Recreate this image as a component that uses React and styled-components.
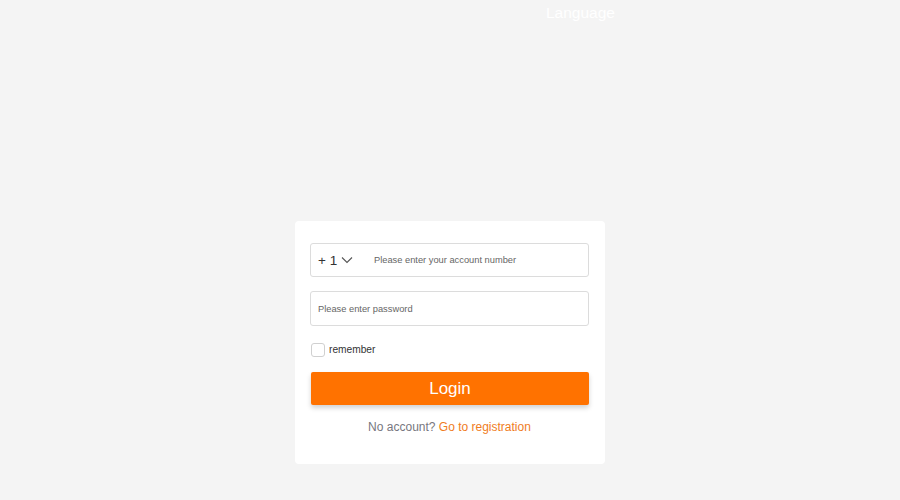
import React, { useState } from 'react';
import styled, { createGlobalStyle } from 'styled-components';

const Global = createGlobalStyle`
  html, body {
    margin: 0;
    padding: 0;
    background: #f4f4f4;
    font-family: "Liberation Sans", Arial, sans-serif;
  }
`;

const Page = styled.div`
  width: 900px;
  height: 500px;
  display: flex;
  flex-direction: column;
  align-items: center;
`;

const Header = styled.div`
  width: 100%;
  height: 25px;
  display: flex;
  align-items: center;
  padding-left: 546px;
  box-sizing: border-box;

  span {
    color: #ffffff;
    font-size: 15.5px;
  }
`;

const Card = styled.div`
  margin-top: 196px;
  width: 310px;
  box-sizing: border-box;
  background: #ffffff;
  border-radius: 4px;
  padding: 22px 16px 30px 15px;
  display: flex;
  flex-direction: column;
`;

const Field = styled.div`
  height: ${(p) => p.$h || 34}px;
  border: 1px solid #dcdcdc;
  border-radius: 3px;
  display: flex;
  align-items: center;
  box-sizing: border-box;
  margin-bottom: ${(p) => p.$gap || 0}px;
`;

const Code = styled.div`
  width: 56px;
  padding-left: 7px;
  display: flex;
  align-items: center;
  gap: 4px;
  font-size: 13.5px;
  color: #333;
  box-sizing: border-box;
`;

const Input = styled.input`
  flex: 1;
  border: none;
  outline: none;
  background: transparent;
  font-family: inherit;
  font-size: 9.3px;
  color: #333;
  padding: 0 ${(p) => p.$pad || 7}px;
  height: 100%;

  &::placeholder {
    color: #666;
  }
`;

const Remember = styled.label`
  margin-top: 17px;
  height: 13px;
  display: flex;
  align-items: center;
  gap: 4px;
  font-size: 10.2px;
  color: #333;
  cursor: pointer;

  i {
    width: 12px;
    height: 12px;
    border: 1px solid #d0d0d0;
    border-radius: 3px;
    display: inline-block;
    margin-left: 1px;
  }
`;

const Button = styled.button`
  margin-top: 16px;
  margin-left: 1px;
  height: 33px;
  border: none;
  border-radius: 2px;
  background: #ff7200;
  color: #fff;
  font-family: inherit;
  font-size: 17px;
  cursor: pointer;
  box-shadow: 0 3px 5px rgba(0, 0, 0, 0.18);
`;

const Footer = styled.div`
  margin-top: 15px;
  text-align: center;
  font-size: 12px;
  color: #777780;

  a {
    color: #f07d1e;
    text-decoration: none;
  }
`;

const App = () => {
  const [account, setAccount] = useState('');
  const [password, setPassword] = useState('');

  return (
    <Page>
      <Global />
      <Header>
        <span>Language</span>
      </Header>
      <Card>
        <Field $gap={14}>
          <Code>
            + 1
            <svg width="12" height="8" viewBox="0 0 12 8" fill="none" stroke="#555" strokeWidth="1.1">
              <path d="M1 1.5 L6 6.5 L11 1.5" />
            </svg>
          </Code>
          <Input
            $pad={7}
            placeholder="Please enter your account number"
            value={account}
            onChange={(e) => setAccount(e.target.value)}
          />
        </Field>
        <Field $h={35}>
          <Input
            type="password"
            placeholder="Please enter password"
            value={password}
            onChange={(e) => setPassword(e.target.value)}
          />
        </Field>
        <Remember>
          <i />
          remember
        </Remember>
        <Button>Login</Button>
        <Footer>
          No account? <a href="#">Go to registration</a>
        </Footer>
      </Card>
    </Page>
  );
};

export default App;
